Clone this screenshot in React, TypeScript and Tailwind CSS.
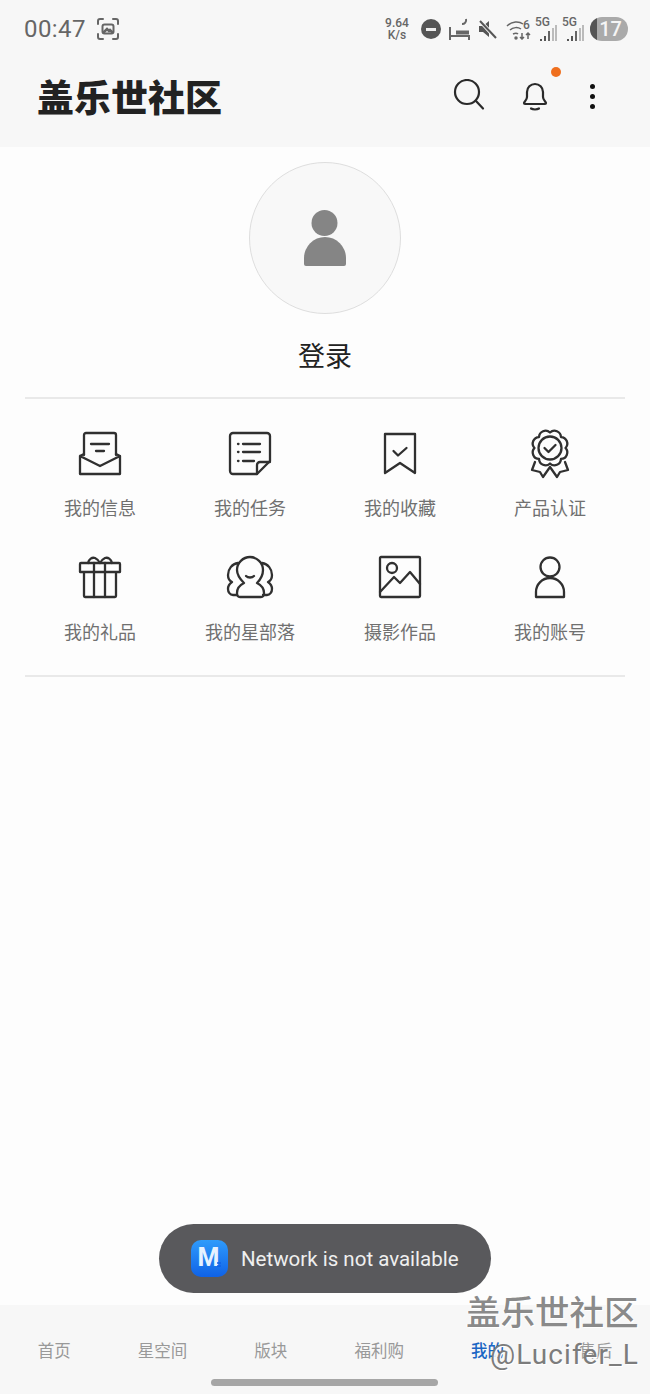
import React from 'react';

const tabs = ['首页', '星空间', '版块', '福利购', '我的', '售后'];

// eight bumps around the badge icon
function scallopPath(cx: number, cy: number, r: number, bumps: number) {
  let d = '';
  for (let i = 0; i <= bumps; i++) {
    const a = (i / bumps) * Math.PI * 2 - Math.PI / 2;
    const x = (cx + r * Math.cos(a)).toFixed(2);
    const y = (cy + r * Math.sin(a)).toFixed(2);
    d += i === 0 ? `M${x} ${y}` : ` A${(r * 0.42).toFixed(2)} ${(r * 0.42).toFixed(2)} 0 0 1 ${x} ${y}`;
  }
  return d + 'Z';
}

function LineIcon({ w, children }: { w: number; children: React.ReactNode }) {
  return (
    <svg className="overflow-visible" width={w} height={44} viewBox={`0 0 ${w} 44`} fill="none" stroke="#303030" strokeWidth="2.3" strokeLinecap="round" strokeLinejoin="round">
      {children}
    </svg>
  );
}

const MailIcon = () => (
  <LineIcon w={42}>
    <path d="M5 24V4a2 2 0 0 1 2-2h28a2 2 0 0 1 2 2v20" />
    <path d="M1 25l4-2M37 23l4 2M1 25v18h40V25L21 35 1 25Z" />
    <path d="M12 13h18M17 20h8" />
  </LineIcon>
);

const TaskIcon = () => (
  <LineIcon w={42}>
    <path d="M28 43H4a3 3 0 0 1-3-3V5a3 3 0 0 1 3-3h34a3 3 0 0 1 3 3v25L28 43Z" />
    <path d="M28 43v-9a3 3 0 0 1 3-3h10" />
    <path d="M9 13h.5M9 21h.5M9 30h.5M14 13h17M14 21h17M14 30h11" />
  </LineIcon>
);

const BookmarkIcon = () => (
  <LineIcon w={32}>
    <path d="M1 3h30v39l-15-10L1 42V3Z" />
    <path d="M9.500 20l4.500 4.500 8.500-7.500" />
  </LineIcon>
);

const BadgeIcon = () => (
  <LineIcon w={44}>
    <path d={scallopPath(22, 17, 15.5, 8)} />
    <circle cx="22" cy="17" r="11.500" />
    <path d="M16.500 17l4 4 7-7" />
    <path d="M7 31l-3 8 8 2 3 5 7-10M37 31l3 8-8 2-3 5-7-10" />
  </LineIcon>
);

const GiftIcon = () => (
  <LineIcon w={42}>
    <path d="M2 8h38a1 1 0 0 1 1 1v8H1V9a1 1 0 0 1 1-1ZM5 17v24a1 1 0 0 0 1 1h30a1 1 0 0 0 1-1V17" />
    <path d="M15 8v34M26 8v34" />
    <path d="M9 8c1-4 4-6 7-5 2 1 4 3 5 5 1-2 3-4 5-5 3-1 6 1 7 5" />
  </LineIcon>
);

const CommunityIcon = () => (
  <LineIcon w={48}>
    <path d="M24 2c7 0 13 6 13 13 0 6-3 10-6 13 4 2 7 5 7 10 0 3-1 4-3 4H14c-2 0-3-1-3-4 0-5 3-8 7-10-3-3-7-7-7-13 0-7 6-13 13-13Z" />
    <path d="M12 8C6 9 2 14 2 20c0 3 2 6 4 7-3 2-4 4-4 7 0 3 2 6 5 6h4M36 8c6 1 10 6 10 12 0 3-2 6-4 7 3 2 4 4 4 7 0 3-2 6-5 6h-4" />
    <path d="M20 21c2 2 6 2 8 0" />
  </LineIcon>
);

const PhotoIcon = () => (
  <LineIcon w={42}>
    <rect x="1" y="2" width="40" height="40" rx="1" />
    <circle cx="13" cy="13" r="5" />
    <path d="M1 37l14-15 6 6 10-11 10 12" />
  </LineIcon>
);

const PersonIcon = () => (
  <LineIcon w={30}>
    <circle cx="15" cy="12" r="9.500" />
    <path d="M1 42V37a14 14 0 0 1 28 0v5H1Z" />
  </LineIcon>
);

const items: { label: string; icon: React.ReactNode }[] = [
  { label: '我的信息', icon: <MailIcon /> },
  { label: '我的任务', icon: <TaskIcon /> },
  { label: '我的收藏', icon: <BookmarkIcon /> },
  { label: '产品认证', icon: <BadgeIcon /> },
  { label: '我的礼品', icon: <GiftIcon /> },
  { label: '我的星部落', icon: <CommunityIcon /> },
  { label: '摄影作品', icon: <PhotoIcon /> },
  { label: '我的账号', icon: <PersonIcon /> },
];

function Signal() {
  return (
    <div className="relative w-[22px] h-[22px]">
      <span className="absolute left-0 top-[-2px] text-[12px] leading-[12px] font-medium text-[#666]">5G</span>
      <svg className="absolute right-0 bottom-[-2px]" width="17" height="17" viewBox="0 0 17 17" fill="none" strokeWidth="2">
        <path d="M1 16v-2M5 16v-5" stroke="#555" />
        <path d="M9 16V6" stroke="#666" />
        <path d="M13 16V3M16 16V0" stroke="#bbb" />
      </svg>
    </div>
  );
}

function StatusBar() {
  return (
    <div className="h-[58px] flex items-center justify-between pl-[24px] pr-[22px] font-['Roboto',sans-serif]">
      <div className="flex items-center gap-[11px]">
        <span className="text-[24px] leading-[30px] text-[#666] tracking-[0.4px]">00:47</span>
        <svg width="22" height="22" viewBox="0 0 22 22" fill="none" stroke="#666" strokeWidth="2" strokeLinecap="round">
          <path d="M1 6V3a2 2 0 0 1 2-2h3M16 1h3a2 2 0 0 1 2 2v3M21 16v3a2 2 0 0 1-2 2h-3M6 21H3a2 2 0 0 1-2-2v-3" />
          <rect x="5.500" y="6.500" width="11" height="9" rx="2" />
          <path d="M7 14l3-3 2 2 1-1 2 2" strokeWidth="2.500" />
        </svg>
      </div>
      <div className="flex items-center">
        <div className="w-[28px] flex flex-col items-center text-[12px] leading-[12px] font-medium text-[#666]">
          <span>9.64</span>
          <span>K/s</span>
        </div>
        <div className="ml-[10px] w-[20px] h-[20px] rounded-full bg-[#555] flex items-center justify-center">
          <div className="w-[10px] h-[3px] bg-[#eee]" />
        </div>
        <svg className="ml-[8px]" width="21" height="22" viewBox="0 0 21 22" fill="none" stroke="#666" strokeWidth="2">
          <path d="M1 9v13M20 22v-5M1 18h19" />
          <path d="M7 14.500h13" strokeWidth="4" />
          <path d="M17 1a4 4 0 0 1-4 5" />
        </svg>
        <svg className="ml-[8px]" width="20" height="20" viewBox="0 0 20 20">
          <path d="M1 7h4l6-5v16l-6-5H1V7Z" fill="#555" />
          <path d="M2 2l16 17" stroke="#f7f7f7" strokeWidth="4" />
          <path d="M2 2l16 17" stroke="#555" strokeWidth="2" />
        </svg>
        <svg className="ml-[8px]" width="26" height="22" viewBox="0 0 26 22" fill="none" stroke="#666" strokeWidth="1.500">
          <path d="M1 8c5-5 12-5 16-2M4 12c3-3 8-3 11-1M7 16c2-1 4-1 5 0" />
          <circle cx="10" cy="20" r="1" fill="#666" />
          <path d="M16 15v6M14 19l2 2 2-2M22 21v-6M20 17l2-2 2 2" />
          <text x="17" y="11" fontSize="12" fontWeight="500" fill="#666" stroke="none" fontFamily="Roboto">6</text>
        </svg>
        <div className="ml-[3px]"><Signal /></div>
        <div className="ml-[5px]"><Signal /></div>
        <div className="ml-[6px] relative w-[38px] h-[24px] rounded-full bg-[#aaaaaa] overflow-hidden flex items-center justify-center">
          <div className="absolute left-0 top-0 bottom-0 w-[7px] bg-[#555]" />
          <span className="relative pl-[3px] text-[20px] leading-[24px] font-medium text-[#f5f5f5]">17</span>
        </div>
      </div>
    </div>
  );
}

function Header() {
  return (
    <header className="bg-[#f7f7f7] h-[147px] shrink-0">
      <StatusBar />
      <div className="h-[76px] flex items-center justify-between pl-[37px] pr-[55px]">
        <h1 className="text-[37px] leading-[44px] font-black text-[#222]">盖乐世社区</h1>
        <div className="flex items-center">
          <svg width="32" height="34" viewBox="0 0 32 34" fill="none" stroke="#2a2a2a" strokeWidth="2.2" strokeLinecap="round">
            <circle cx="14" cy="13" r="12" />
            <path d="M23 22l7 7.500" />
          </svg>
          <div className="relative ml-[37px] w-[26px] h-[30px]">
            <svg width="26" height="30" viewBox="0 0 26 30" fill="none" stroke="#2a2a2a" strokeWidth="2.2" strokeLinecap="round" strokeLinejoin="round">
              <path d="M2 22c0-1 3-3 3-6v-5a8 8 0 0 1 16 0v5c0 3 3 5 3 6 0 .6-.4 1-1 1H3c-.6 0-1-.4-1-1Z" />
              <path d="M9 27.500c2 1.300 6 1.300 8 0" />
            </svg>
            <span className="absolute left-[29px] top-[-14px] w-[10px] h-[10px] rounded-full bg-[#ef6f1e]" />
          </div>
          <div className="ml-[42px] flex flex-col gap-[5px]">
            <span className="w-[5px] h-[5px] rounded-full bg-[#111]" />
            <span className="w-[5px] h-[5px] rounded-full bg-[#111]" />
            <span className="w-[5px] h-[5px] rounded-full bg-[#111]" />
          </div>
        </div>
      </div>
    </header>
  );
}

function Toast() {
  return (
    <div className="absolute left-[159px] top-[1224px] w-[332px] h-[69px] rounded-full bg-[#59595c] flex items-center pl-[32px] gap-[13px]">
      <svg width="37" height="37" viewBox="0 0 37 37">
        <defs>
          <linearGradient id="logo-blue" x1="0" y1="0" x2="0" y2="1">
            <stop offset="0" stopColor="#2f9bfb" />
            <stop offset="1" stopColor="#0f62e6" />
          </linearGradient>
        </defs>
        <rect width="37" height="37" rx="10" fill="url(#logo-blue)" />
        <text x="6.500" y="26" fontSize="25" fontWeight="700" fill="#e6f2ff" fontFamily="Roboto">M</text>
        <path d="M26 23h4M26 26h4" stroke="#0f62e6" strokeWidth="1.500" />
      </svg>
      <span className="text-[20.500px] leading-[28px] text-[#efefef] font-['Roboto',sans-serif]">Network is not available</span>
    </div>
  );
}

function Watermark() {
  return (
    <>
      <span className="absolute left-[466px] top-[1289px] text-[34.500px] leading-[42px] font-medium text-[#8a8a8a] [text-shadow:1px_1px_0_#ffffff,-1px_0_0_#ffffff]">盖乐世社区</span>
      <span className="absolute left-[490px] top-[1338px] text-[28px] leading-[34px] text-[#7c7c7c] tracking-[1.1px] font-['Roboto',sans-serif] [text-shadow:1px_1px_0_#ffffff]">@Lucifer_L</span>
    </>
  );
}

export default function App() {
  return (
    <div className="relative w-[650px] h-[1394px] overflow-hidden bg-[#fdfdfd] flex flex-col font-['Noto_Sans_CJK_SC',sans-serif]">
      <Header />

      <main className="flex-1 px-[25px]">
        <div className="flex flex-col items-center pt-[15px]">
          <div className="w-[152px] h-[152px] rounded-full bg-[#f8f8f8] border border-[#dedede] flex items-center justify-center">
            <svg width="44" height="56" viewBox="0 0 44 56" fill="#858585">
              <circle cx="21.500" cy="13" r="13" />
              <path d="M1 54V48a21 21 0 0 1 42 0v6a2 2 0 0 1-2 2H3a2 2 0 0 1-2-2Z" />
            </svg>
          </div>
          <div className="mt-[21px] text-[27px] leading-[40px] text-[#222]">登录</div>
        </div>

        <div className="mt-[22px] h-[2px] bg-[#e9e9e9]" />

        <div className="grid grid-cols-4 gap-y-[34px] pt-[32px] pb-[30px]">
          {items.map(item => (
            <div key={item.label} className="flex flex-col items-center">
              <div className="h-[44px] flex items-center justify-center">{item.icon}</div>
              <div className="mt-[18px] h-[28px] text-[18px] leading-[28px] text-[#707070]">{item.label}</div>
            </div>
          ))}
        </div>

        <div className="h-[2px] bg-[#e9e9e9]" />
      </main>

      <nav className="relative h-[89px] shrink-0 bg-[#f7f7f7]">
        <div className="grid grid-cols-6 pt-[32px]">
          {tabs.map(tab => (
            <div key={tab} className={`text-center text-[16.500px] leading-[26px] ${tab === '我的' ? 'text-[#1a66c4] font-medium' : 'text-[#999999]'}`}>
              {tab}
            </div>
          ))}
        </div>
        <div className="absolute left-[211px] bottom-[8px] w-[227px] h-[7px] rounded-full bg-[#a6a6a6]" />
      </nav>

      <Toast />
      <Watermark />
    </div>
  );
}
